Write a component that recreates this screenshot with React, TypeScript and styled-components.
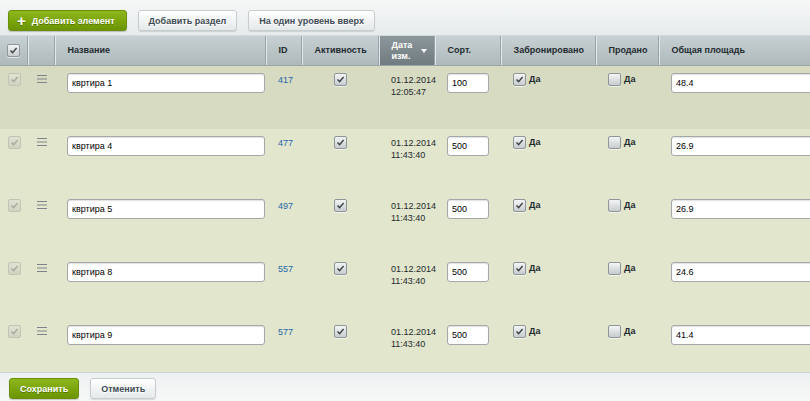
import { FC } from "react";
import styled, { createGlobalStyle } from "styled-components";

const GlobalStyle = createGlobalStyle`
    html, body {
        margin: 0;
        padding: 0;
        background: #f5f7f7;
    }
    body {
        font-family: "Liberation Sans", Arial, sans-serif;
    }
`;

type Flat = {
    id: number,
    name: string,
    date: string,
    time: string,
    sort: number,
    reserved: boolean,
    sold: boolean,
    area: string,
};

const flats: Flat[] = [
    { id: 417, name: "квртира 1", date: "01.12.2014", time: "12:05:47", sort: 100, reserved: true, sold: false, area: "48.4" },
    { id: 477, name: "квртира 4", date: "01.12.2014", time: "11:43:40", sort: 500, reserved: true, sold: false, area: "26.9" },
    { id: 497, name: "квртира 5", date: "01.12.2014", time: "11:43:40", sort: 500, reserved: true, sold: false, area: "26.9" },
    { id: 557, name: "квртира 8", date: "01.12.2014", time: "11:43:40", sort: 500, reserved: true, sold: false, area: "24.6" },
    { id: 577, name: "квртира 9", date: "01.12.2014", time: "11:43:40", sort: 500, reserved: true, sold: false, area: "41.4" },
];

const CheckMark = () => (
    <svg width="9" height="9" viewBox="0 0 9 9">
        <path d="M1.5 4.5 L3.6 6.6 L7.6 2" fill="none" stroke="currentColor" strokeWidth="1.4" />
    </svg>
);

const Check: FC<{ checked?: boolean, disabled?: boolean }> = ({ checked, disabled }) => (
    <CheckBox disabled={disabled}>{checked && <CheckMark />}</CheckBox>
);

const Burger = () => (
    <svg width="10" height="8" viewBox="0 0 10 8">
        <path d="M0 0.5 H10 M0 4 H10 M0 7.5 H10" stroke="#7d858a" strokeWidth="1" />
    </svg>
);

export default function App() {
    return <Page>
        <GlobalStyle />
        <Toolbar>
            <GreenButton><Plus>+</Plus>Добавить элемент</GreenButton>
            <GrayButton>Добавить раздел</GrayButton>
            <GrayButton>На один уровень вверх</GrayButton>
        </Toolbar>
        <TableWrap>
            <Grid>
                <colgroup>
                    <col style={{ width: 28 }} />
                    <col style={{ width: 27 }} />
                    <col style={{ width: 211 }} />
                    <col style={{ width: 36 }} />
                    <col style={{ width: 77 }} />
                    <col style={{ width: 56 }} />
                    <col style={{ width: 66 }} />
                    <col style={{ width: 95 }} />
                    <col style={{ width: 63 }} />
                    <col style={{ width: 250 }} />
                </colgroup>
                <thead>
                    <tr>
                        <Th center><Check checked /></Th>
                        <Th />
                        <Th>Название</Th>
                        <Th>ID</Th>
                        <Th>Активность</Th>
                        <Th sorted>
                            <SortHead>
                                <span>Дата<br />изм.</span>
                                <Arrow />
                            </SortHead>
                        </Th>
                        <Th>Сорт.</Th>
                        <Th>Забронировано</Th>
                        <Th>Продано</Th>
                        <Th>Общая площадь</Th>
                    </tr>
                </thead>
                <tbody>
                    {flats.map((f, i) => (
                        <Row key={f.id} active={i === 0}>
                            <Td center><Check checked disabled /></Td>
                            <Td center><BurgerWrap><Burger /></BurgerWrap></Td>
                            <Td><Field width={198} defaultValue={f.name} /></Td>
                            <Td><IdLink>{f.id}</IdLink></Td>
                            <Td center><Check checked /></Td>
                            <Td><DateText>{f.date}<br />{f.time}</DateText></Td>
                            <Td><Field width={42} defaultValue={String(f.sort)} /></Td>
                            <Td><Label><Check checked={f.reserved} />Да</Label></Td>
                            <Td><Label><Check checked={f.sold} />Да</Label></Td>
                            <Td><Field width={150} defaultValue={f.area} /></Td>
                        </Row>
                    ))}
                </tbody>
            </Grid>
        </TableWrap>
        <Footer>
            <SaveButton>Сохранить</SaveButton>
            <GrayButton>Отменить</GrayButton>
        </Footer>
    </Page>
}

const Page = styled.div`
    width: 810px;
    height: 401px;
    display: flex;
    flex-direction: column;
    overflow: hidden;
    background: #f5f7f7;
`;

const Toolbar = styled.div`
    height: 36px;
    box-sizing: border-box;
    display: flex;
    align-items: flex-start;
    gap: 11px;
    padding: 10px 8px 0;
    background: linear-gradient(#f6f8f8, #e6ebeb);
    border-bottom: 1px solid #d3dadb;
`;

const ButtonBase = styled.button`
    height: 21px;
    box-sizing: border-box;
    border-radius: 3px;
    font-family: "Liberation Sans", Arial, sans-serif;
    font-size: 9px;
    font-weight: bold;
    padding: 0 10px;
    display: flex;
    align-items: center;
    cursor: pointer;
`;

const GrayButton = styled(ButtonBase)`
    color: #3f4b54;
    background: linear-gradient(#ffffff, #e4e9ea);
    border: 1px solid #c6cdce;
    box-shadow: 0 1px 1px rgba(0, 0, 0, 0.12);
    text-shadow: 0 1px #fff;
`;

const GreenButton = styled(ButtonBase)`
    color: #fff;
    background: linear-gradient(#8db71a, #6b9500);
    border: 1px solid #6a8f0c;
    text-shadow: 0 1px rgba(0, 0, 0, 0.3);
    padding: 0 11px 0 8px;
    box-shadow: 0 1px 1px rgba(0, 0, 0, 0.2);
`;

const SaveButton = styled(GreenButton)`
    padding: 0 10px;
`;

const Plus = styled.span`
    font-size: 15px;
    margin-right: 6px;
    line-height: 1;
`;

const TableWrap = styled.div`
    flex: 1;
    overflow: hidden;
    background: #e2e6cc;
`;

const Grid = styled.table`
    table-layout: fixed;
    border-collapse: collapse;
    width: 909px;
    font-size: 9px;
    color: #1d2a2f;
`;

const Th = styled.th<{ sorted?: boolean, center?: boolean }>`
    height: 29px;
    padding: 0 0 0 ${p => p.center ? 0 : 12}px;
    text-align: ${p => p.center ? "center" : "left"};
    font-weight: bold;
    font-size: 9px;
    line-height: 11px;
    color: ${p => p.sorted ? "#ffffff" : "#1f2b30"};
    background: ${p => p.sorted
        ? "linear-gradient(#8c979b, #6f7b80)"
        : "linear-gradient(#c7d0d2, #aeb9bc)"};
    border-right: 1px solid #e3e8e9;
    border-bottom: 1px solid #9aa6a9;
    box-shadow: inset -1px 0 #98a4a7;
    vertical-align: middle;
`;

const SortHead = styled.div`
    display: flex;
    align-items: center;
    justify-content: space-between;
    padding-right: 8px;
`;

const Arrow = styled.span`
    width: 0;
    height: 0;
    border-left: 3px solid transparent;
    border-right: 3px solid transparent;
    border-top: 4px solid #fff;
`;

const Row = styled.tr<{ active?: boolean }>`
    height: 63px;
    background: ${p => p.active ? "#d7dbc2" : "#e2e6cc"};
`;

const Td = styled.td<{ center?: boolean }>`
    vertical-align: top;
    padding: 7px 0 0 ${p => p.center ? 0 : 12}px;
    text-align: ${p => p.center ? "center" : "left"};
`;

const CheckBox = styled.span<{ disabled?: boolean }>`
    display: inline-flex;
    align-items: center;
    justify-content: center;
    width: 11px;
    height: 11px;
    border-radius: 2px;
    vertical-align: top;
    border: 1px solid ${p => p.disabled ? "#c1c5b4" : "#8f9699"};
    background: ${p => p.disabled
        ? "linear-gradient(#e0e3d2, #cfd3c0)"
        : "linear-gradient(#f4f5f5, #c7ccce)"};
    color: ${p => p.disabled ? "#a7ac9a" : "#3c4347"};
    box-shadow: ${p => p.disabled ? "none" : "0 1px 0 rgba(255,255,255,0.6)"};
`;

const BurgerWrap = styled.span`
    display: inline-block;
    padding-top: 2px;
`;

const Field = styled.input<{ width: number }>`
    width: ${p => p.width}px;
    height: 20px;
    box-sizing: border-box;
    border: 1px solid #a3a8a9;
    border-radius: 3px;
    padding: 0 4px;
    font-family: "Liberation Sans", Arial, sans-serif;
    font-size: 9px;
    color: #000;
    background: #fff;
    box-shadow: inset 0 1px 1px rgba(0, 0, 0, 0.12);
    outline: none;
`;

const IdLink = styled.a`
    display: inline-block;
    padding-top: 2px;
    color: #2466ac;
    text-decoration: none;
`;

const DateText = styled.div`
    line-height: 12px;
    padding-top: 1px;
    color: #1d2a2f;
`;

const Label = styled.label`
    display: inline-flex;
    align-items: flex-start;
    gap: 3px;
    font-weight: bold;
    color: #1d2a2f;
    line-height: 12px;
`;

const Footer = styled.div`
    height: 29px;
    box-sizing: border-box;
    display: flex;
    align-items: flex-start;
    gap: 11px;
    padding: 5px 9px 0;
    background: linear-gradient(#eef1f1, #f6f8f8);
    border-top: 1px solid #d0d6d6;
`;
